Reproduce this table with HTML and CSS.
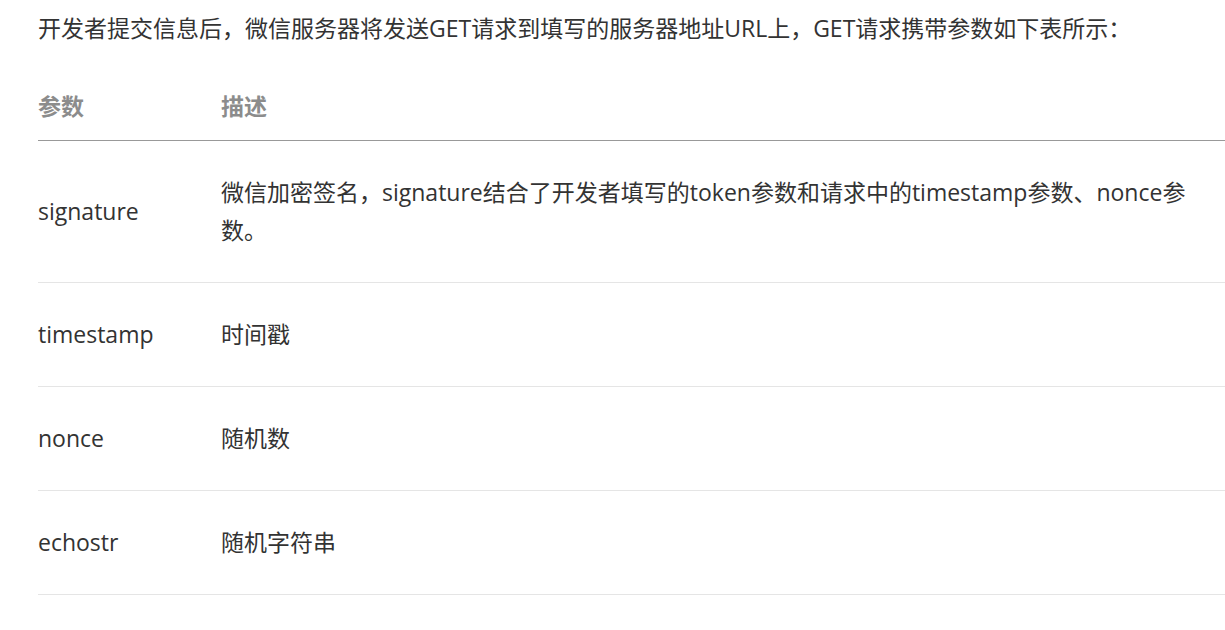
FILE: index.html
```html
<!DOCTYPE html>
<html lang="zh-CN">

<head>
    <meta charset="UTF-8">
    <meta name="viewport" content="width=device-width, initial-scale=1.0">
    <title>接入指南</title>
    <link rel="stylesheet" href="styles.css">
</head>

<body>
    <div class="content">
        <p class="intro">开发者提交信息后，微信服务器将发送GET请求到填写的服务器地址URL上，GET请求携带参数如下表所示：</p>
        <table class="params">
            <thead>
                <tr>
                    <th class="col-name">参数</th>
                    <th>描述</th>
                </tr>
            </thead>
            <tbody>
                <tr>
                    <td>signature</td>
                    <td>微信加密签名，signature结合了开发者填写的token参数和请求中的timestamp参数、nonce参数。</td>
                </tr>
                <tr>
                    <td>timestamp</td>
                    <td>时间戳</td>
                </tr>
                <tr>
                    <td>nonce</td>
                    <td>随机数</td>
                </tr>
                <tr>
                    <td>echostr</td>
                    <td>随机字符串</td>
                </tr>
            </tbody>
        </table>
    </div>
</body>

</html>
```

FILE: styles.css
```css
body {
    font-family: 'Open Sans', 'Noto Sans CJK SC', sans-serif;
    font-size: 23px;
    line-height: 38px;
    color: #333;
    background: #fff;
    margin: 0;
    overflow: hidden;
}

.content {
    padding: 9px 0 0 38px;
}

.intro {
    margin: 0 0 9px;
}

.params {
    width: 100%;
    border-collapse: collapse;
}

.params th {
    text-align: left;
    font-weight: bold;
    color: #8c8c8c;
    padding: 31px 0 15px;
    border-bottom: 1px solid #999;
}

.params .col-name {
    width: 183px;
}

.params td {
    padding: 31.5px 24px 33.5px 0;
    border-bottom: 1px solid #e5e5e5;
    vertical-align: middle;
}
```
